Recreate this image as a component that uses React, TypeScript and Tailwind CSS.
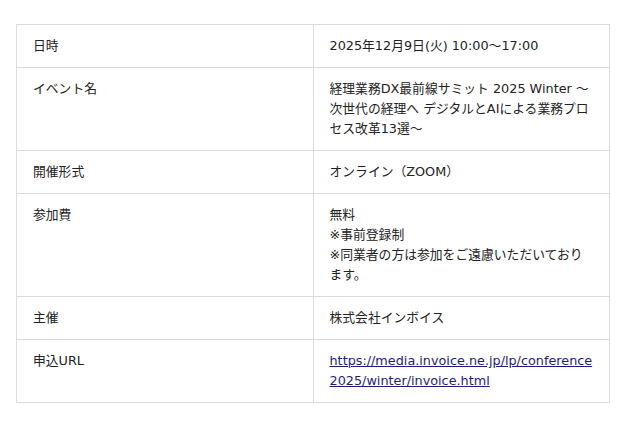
const rows: { label: string; value: React.ReactNode }[] = [
  { label: "日時", value: "2025年12月9日(火) 10:00〜17:00" },
  {
    label: "イベント名",
    value: "経理業務DX最前線サミット 2025 Winter 〜次世代の経理へ デジタルとAIによる業務プロセス改革13選〜",
  },
  { label: "開催形式", value: "オンライン（ZOOM）" },
  {
    label: "参加費",
    value: (
      <>
        無料
        <br />
        ※事前登録制
        <br />
        ※同業者の方は参加をご遠慮いただいております。
      </>
    ),
  },
  { label: "主催", value: "株式会社インボイス" },
  {
    label: "申込URL",
    value: (
      <a
        href="#"
        className="text-[#1f1d7a] underline break-all"
      >
        https://media.invoice.ne.jp/lp/conference2025/winter/invoice.html
      </a>
    ),
  },
];

const App = () => {
  return (
    <div className="min-h-[428px] w-[640px] bg-white pt-6 pl-4 font-['DejaVu_Sans','Noto_Sans_CJK_JP',sans-serif] text-[12.8px] leading-5 text-[#222]">
      <table className="w-[594px] table-fixed border-collapse">
        <tbody>
          {rows.map((row) => (
            <tr key={row.label}>
              <td className="w-1/2 border border-[#dcdcdc] px-4 py-[11px] align-top">
                {row.label}
              </td>
              <td className="w-1/2 border border-[#dcdcdc] px-4 py-[11px] align-top">
                {row.value}
              </td>
            </tr>
          ))}
        </tbody>
      </table>
    </div>
  );
};

export default App;
